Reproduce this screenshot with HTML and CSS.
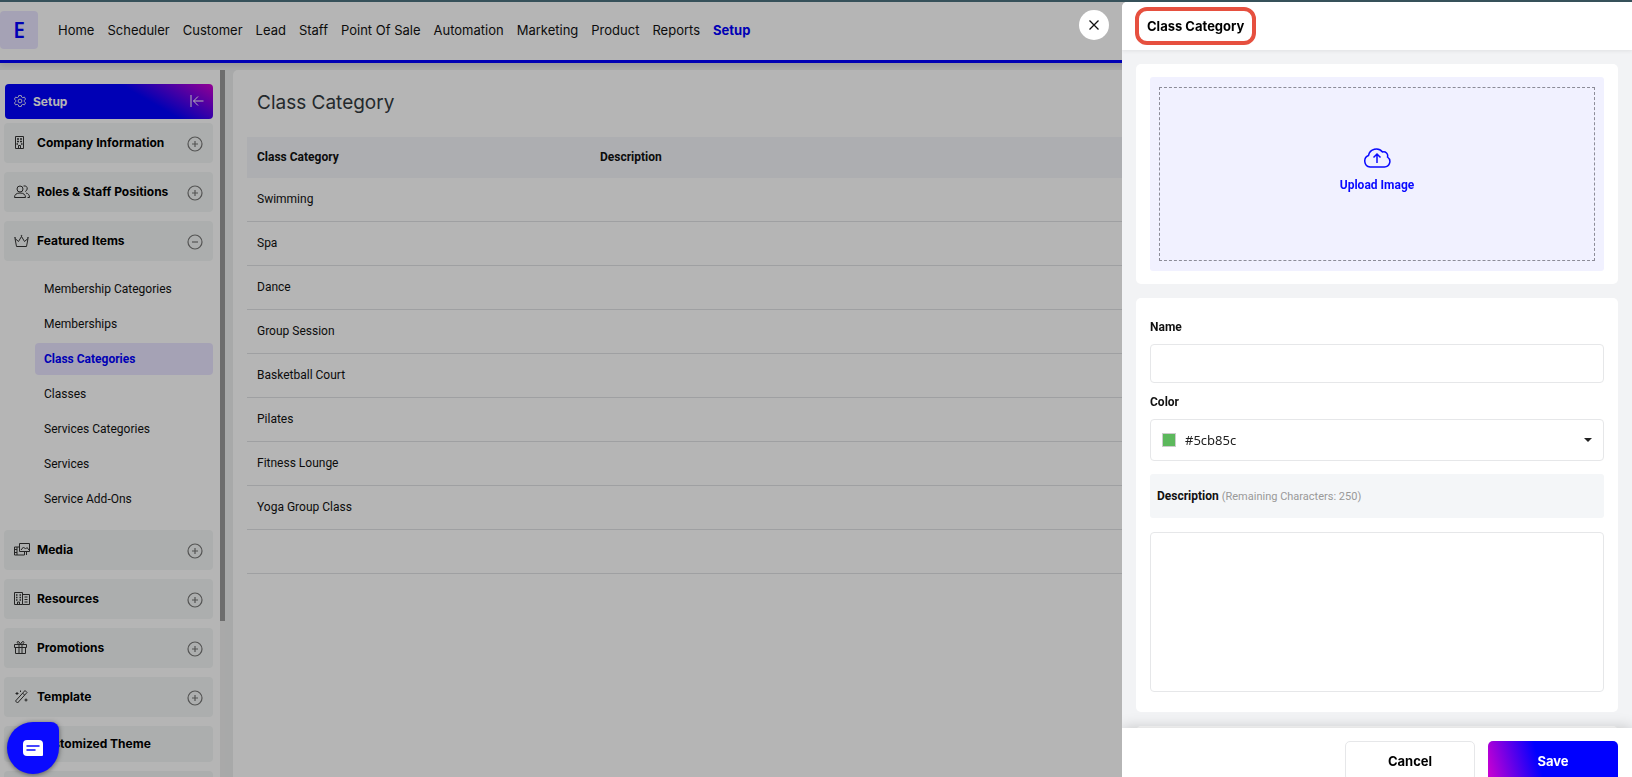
FILE: index.html
```html
<!DOCTYPE html>
<html lang="en">
<head>
  <meta charset="UTF-8">
  <meta name="viewport" content="width=device-width, initial-scale=1">
  <title>Class Category</title>
  <link rel="stylesheet" href="styles.css">
</head>
<body>
<svg class="defs">
  <symbol id="plus" viewBox="0 0 16 16"><circle cx="8" cy="8" r="7"/><path d="M8 5v6M5 8h6"/></symbol>
  <symbol id="minus" viewBox="0 0 16 16"><circle cx="8" cy="8" r="7"/><path d="M5 8h6"/></symbol>
</svg>

<div class="page">
  <header class="navbar">
    <a class="logo" href="#">E</a>
    <nav class="nav">
      <a href="#">Home</a>
      <a href="#">Scheduler</a>
      <a href="#">Customer</a>
      <a href="#">Lead</a>
      <a href="#">Staff</a>
      <a href="#">Point Of Sale</a>
      <a href="#">Automation</a>
      <a href="#">Marketing</a>
      <a href="#">Product</a>
      <a href="#">Reports</a>
      <a href="#" class="active">Setup</a>
    </nav>
  </header>

  <div class="content">
    <aside class="sidebar">
      <div class="menu">
        <button class="menu-head">
          <svg class="icon" viewBox="1 1 14 14"><path d="M6.6 1.500h2.800l.5 1.900 1.300.7 2-.6 1.300 2.300-1.400 1.400v1.600l1.400 1.400-1.300 2.300-2-.6-1.300.7-.5 1.900H6.600l-.5-1.900-1.300-.7-2 .6-1.300-2.300 1.400-1.400V7.200L1.500 5.800l1.300-2.300 2 .6 1.300-.7z"/><circle cx="8" cy="8" r="2.200"/></svg>
          <span>Setup</span>
          <svg class="collapse" viewBox="0 0 14 12"><path d="M1 0v12M13.500 6H3.500M8 1.500L3.500 6 8 10.500"/></svg>
        </button>

        <button class="menu-item">
          <svg class="icon" viewBox="0 0 16 16"><path d="M1.500 1.500h8v12h-8z"/><path d="M4.500 13.500v-3h2v3"/><path d="M3 4h2M6 4h2M3 6.500h2M6 6.500h2M2.500 9h1.500M7 9h1.500" stroke-width="1.500"/></svg>
          <span>Company Information</span>
          <svg class="toggle"><use href="#plus"/></svg>
        </button>
        <button class="menu-item">
          <svg class="icon" viewBox="0 0 16 16"><circle cx="6" cy="5" r="3"/><path d="M.5 13.500c0-3 2-4.500 5.500-4.500s5.500 1.500 5.500 4.500zM9.500 2c2.500-.6 4 1 3.700 3-.2 1.300-1 2-2 2.500M12 9c2.300.5 3.500 2 3.500 4.500h-2"/></svg>
          <span>Roles &amp; Staff Positions</span>
          <svg class="toggle"><use href="#plus"/></svg>
        </button>
        <button class="menu-item">
          <svg class="icon" viewBox="0 0 16 16"><path d="M2.500 13.500L1 5.500 4.500 8.500 7.500 3.500l3 5L14 5.500l-1.500 8z"/><circle cx="1" cy="4.800" r=".4"/><circle cx="7.500" cy="2.800" r=".4"/><circle cx="14" cy="4.800" r=".4"/></svg>
          <span>Featured Items</span>
          <svg class="toggle"><use href="#minus"/></svg>
        </button>

        <ul class="submenu">
          <li><a href="#">Membership Categories</a></li>
          <li><a href="#">Memberships</a></li>
          <li><a href="#" class="active">Class Categories</a></li>
          <li><a href="#">Classes</a></li>
          <li><a href="#">Services Categories</a></li>
          <li><a href="#">Services</a></li>
          <li><a href="#">Service Add-Ons</a></li>
        </ul>

        <button class="menu-item">
          <svg class="icon" viewBox="0 0 16 16"><path d="M5.500 1.500h10v8h-10zM7 8l2.500-3 2 2 1.500-1.500L15 8M5.500 5H.5v8h10v-3.500M3 5v8M.5 7.500H3M.5 10.500H3M10.500 9.500v3.500M12.500 9.500v3.500"/></svg>
          <span>Media</span>
          <svg class="toggle"><use href="#plus"/></svg>
        </button>
        <button class="menu-item">
          <svg class="icon" viewBox="0 0 16 16"><path d="M.5 1.500h8v12h-8zM8.500 3.500h7v10h-7M10.500 6h3M10.500 8.500h3M10.500 11h3"/><path d="M2 4h1.500M5.500 4H7M2 6.500h1.500M5.500 6.500H7M2 9h1.500M5.500 9H7" stroke-width="1.500"/><path d="M3.500 13.500v-2.500h2v2.500"/></svg>
          <span>Resources</span>
          <svg class="toggle"><use href="#plus"/></svg>
        </button>
        <button class="menu-item">
          <svg class="icon" viewBox="0 0 16 16"><path d="M.5 4.500h12v3H.5zM1.500 7.500h10v6h-10zM5 4.500v9M8 4.500v9M6.500 4.500C3 4.500 2.500 1.500 4 1.500s2.500 3 2.500 3S7.500 1.500 9 1.500s1.500 3-2.500 3"/></svg>
          <span>Promotions</span>
          <svg class="toggle"><use href="#plus"/></svg>
        </button>
        <button class="menu-item">
          <svg class="icon" viewBox="0 0 16 16"><path d="M1.500 12l9.500-10.500 2 2L3.500 14zM8.500 4l2 2M3 3v3M1.500 4.500h3M12 9.500v3M10.500 11h3M6.500 1.500V3"/></svg>
          <span>Template</span>
          <svg class="toggle"><use href="#plus"/></svg>
        </button>
        <button class="menu-item plain">
          <svg class="icon" viewBox="0 0 16 16"><circle cx="7" cy="7" r="6"/></svg>
          <span>Customized Theme</span>
        </button>
        <button class="menu-item plain"></button>
      </div>
      <div class="scrollbar"><div class="thumb"></div></div>
    </aside>

    <main class="panel">
      <h1>Class Category</h1>
      <table class="list">
        <thead>
          <tr><th class="col-name">Class Category</th><th>Description</th></tr>
        </thead>
        <tbody>
          <tr><td>Swimming</td><td></td></tr>
          <tr><td>Spa</td><td></td></tr>
          <tr><td>Dance</td><td></td></tr>
          <tr><td>Group Session</td><td></td></tr>
          <tr><td>Basketball Court</td><td></td></tr>
          <tr><td>Pilates</td><td></td></tr>
          <tr><td>Fitness Lounge</td><td></td></tr>
          <tr><td>Yoga Group Class</td><td></td></tr>
          <tr><td></td><td></td></tr>
        </tbody>
      </table>
    </main>
  </div>
</div>

<div class="overlay"></div>

<button class="chat" aria-label="Chat">
  <svg viewBox="0 0 20 16"><path d="M4 0h12q4 0 4 4v11q0 1-1 1H4q-4 0-4-4V4q0-4 4-4z" fill="#fff"/><path d="M4 6h12M4 10h8" stroke="#0a0aff" stroke-width="1.500" stroke-linecap="round"/></svg>
</button>

<button class="close" aria-label="Close">
  <svg viewBox="0 0 10 10"><path d="M.5.5l9 9M9.500.5l-9 9"/></svg>
</button>

<form class="drawer">
  <div class="drawer-head"><h2>Class Category</h2></div>

  <div class="drawer-body">
    <section class="card">
      <div class="upload">
        <button type="button" class="upload-btn">
          <svg viewBox="0 0 28 20"><path d="M7 19h14.500a5.500 5.500 0 0 0 3-10 4 4 0 0 0-5-5A8 8 0 0 0 5.500 7.500 6 6 0 0 0 7 19z"/><path d="M14 15V6.500M10.500 9.500L14 6l3.500 3.500"/></svg>
          <span>Upload Image</span>
        </button>
      </div>
    </section>

    <section class="card fields">
      <label for="name">Name</label>
      <input id="name" class="box" type="text">

      <label for="color">Color</label>
      <div class="box color-box">
        <span class="swatch"></span>
        <select id="color">
          <option>#5cb85c</option>
        </select>
        <svg class="caret" viewBox="0 0 8 4"><path d="M0 0h8L4 4z"/></svg>
      </div>

      <label for="description" class="desc-label">Description <small>(Remaining Characters: 250)</small></label>
      <textarea id="description" class="box"></textarea>
    </section>

    <section class="card"></section>
  </div>

  <div class="drawer-foot">
    <button type="button" class="btn">Cancel</button>
    <button type="button" class="btn btn-save">Save</button>
  </div>
</form>
<div class="topline"></div>
</body>
</html>
```
FILE: styles.css
```css
* { box-sizing: border-box; }
body { margin: 0; height: 100vh; overflow: hidden; font-family: Roboto, sans-serif; font-size: 12px; color: #111; background: #edeeef; }
button { font: inherit; color: inherit; border: none; background: none; padding: 0; }
a { color: inherit; text-decoration: none; }
svg { fill: none; stroke: currentColor; }
.defs { display: none; }
.topline { position: fixed; top: 0; left: 0; right: 0; height: 2px; background: #36515a; z-index: 5; }

/* page */
.page { display: flex; flex-direction: column; height: 100vh; padding-top: 2px; }
.navbar { display: flex; align-items: center; gap: 20px; height: 61px; padding-bottom: 3px; background: #fff; border-bottom: 3px solid #0000ff; box-shadow: 0 2px 6px rgba(0,0,0,.1); }
.logo { width: 38px; height: 38px; text-align: center; border-radius: 4px; background: #e9e5ff; color: #0000ff; font: 600 21px/38px "Noto Sans", sans-serif; }
.nav { display: flex; gap: 13px; font-family: Inter, sans-serif; font-size: 13px; }
.nav .active { color: #0000ff; font-weight: bold; }
.content { flex: 1; min-height: 0; display: grid; grid-template-columns: 225px 1fr; gap: 8px; padding-top: 7px; }

/* sidebar */
.sidebar { display: flex; overflow: hidden; }
.menu { flex: 1; background: #fff; padding: 14px 7px 0 4px; display: flex; flex-direction: column; gap: 9px; }
.menu > * { flex-shrink: 0; }
.menu-head, .menu-item { display: flex; align-items: center; text-align: left; font-family: Inter, sans-serif; font-weight: bold; font-size: 12px; border-radius: 4px; }
.menu-head { height: 35px; padding: 0 9px 1px; margin-bottom: -5px; margin-left: 1px; gap: 7px; color: #fff; background: linear-gradient(30deg, #0000ff 65%, #d000d0); }
.menu-head .icon { width: 12px; height: 12px; }
.collapse { width: 14px; height: 12px; margin-left: auto; }
.menu-item { height: 40px; padding: 0 10px 2px; gap: 7px; background: #f3f6f5; color: #000; }
.menu-item.plain { height: 36px; }
.icon { width: 16px; height: 16px; }
.menu-item .icon { margin-top: 2px; color: #333; }
.toggle { width: 16px; height: 16px; margin: 3px 0 0 auto; color: #777; stroke-width: 1.200; }
.submenu { list-style: none; margin: 3px 0 6px 31px; padding: 0; display: flex; flex-direction: column; gap: 3px; }
.submenu a { display: block; line-height: 32px; padding-left: 9px; border-radius: 4px; }
.submenu .active { background: #e9e5ff; color: #0000ff; font-weight: bold; }
.scrollbar { width: 5px; background: #eee; }
.thumb { height: 78%; background: #9a9a9a; }

/* list */
.panel { background: #fff; border-radius: 5px 0 0 0; padding: 19px 14px; }
h1 { margin: 0 10px 20px; font: normal 19px/28px Inter, sans-serif; color: #333b40; }
.list { width: 100%; border-spacing: 0; table-layout: fixed; }
.list th, .list td { text-align: left; padding: 0 10px 2px; }
.list th { height: 41px; background: #f4f6f9; font-weight: bold; }
.list td { height: 44px; border-bottom: 1px solid #e1e2e4; }
.list .col-name { width: 343px; }

.overlay { position: fixed; inset: 0; background: rgba(0,0,0,.29); }
.chat { position: fixed; left: 7px; bottom: 3px; width: 52px; height: 52px; border-radius: 50% 8px 50% 50%; background: #0a0aff; box-shadow: 0 1px 5px rgba(0,0,0,.5); display: flex; align-items: center; justify-content: center; }
.chat svg { width: 20px; height: 16px; stroke: none; }
.close { position: fixed; top: 10px; right: 523px; width: 30px; height: 30px; border-radius: 50%; background: #fff; display: flex; align-items: center; justify-content: center; }
.close svg { width: 10px; height: 10px; stroke-width: 1.300; }

/* drawer */
.drawer { position: fixed; top: 2px; right: 0; bottom: 0; width: 510px; display: flex; flex-direction: column; background: #f2f3f5; border-radius: 5px 0 0 0; overflow: hidden; }
.drawer-head { height: 48px; flex-shrink: 0; padding: 5px 13px; background: #fff; box-shadow: 0 1px 4px rgba(0,0,0,.08); }
.drawer-head h2 { display: inline-block; margin: 0; padding: 0 8px; border: 4px solid #e6503f; border-radius: 12px; font: bold 13px/30px Inter, sans-serif; color: #000; }
.drawer-body { flex: 1; min-height: 0; overflow: hidden; padding: 14px; display: flex; flex-direction: column; gap: 14px; }
.card { flex-shrink: 0; background: #fff; border-radius: 5px; padding: 13px 14px; }
.upload { height: 194px; padding: 10px 9px; background: #f1f1ff; border-radius: 3px; }
.upload-btn { width: 100%; height: 100%; padding-bottom: 8px; border: 1px dashed #8c8c98; color: #0a0aff; font-weight: bold; display: flex; flex-direction: column; align-items: center; justify-content: center; gap: 10px; }
.upload-btn svg { width: 28px; height: 20px; stroke-width: 1.500; }
.fields { display: flex; flex-direction: column; padding: 20px 14px; }
.fields label { line-height: 18px; margin-bottom: 8px; font-weight: bold; }
.box { width: 100%; border: 1px solid #e6e7e9; border-radius: 4px; background: #fff; outline: none; }
input.box { height: 39px; margin-bottom: 10px; padding: 0 12px; }
.color-box { height: 42px; margin-bottom: 13px; padding: 0 11px; display: flex; align-items: center; }
.swatch { width: 14px; height: 14px; background: #5cb85c; border: 1px solid #ccc; }
.color-box select { flex: 1; height: 38px; padding: 0 0 0 9px; border: none; background: none; appearance: none; outline: none; font: 13px "Noto Sans", sans-serif; color: #222; }
.caret { width: 8px; height: 4px; fill: #222; stroke: none; }
.fields .desc-label { height: 44px; line-height: 44px; padding: 0 7px; margin-bottom: 14px; background: #f4f6f8; border-radius: 3px; }
.desc-label small { font-size: 11px; font-weight: normal; color: #999; }
textarea.box { height: 160px; resize: none; padding: 10px; }
.drawer-foot { height: 49px; flex-shrink: 0; display: flex; justify-content: flex-end; gap: 13px; padding: 13px 14px 0; background: #fff; box-shadow: 0 0 14px rgba(0,0,0,.2); }
.btn { width: 130px; height: 40px; padding-bottom: 1px; border: 1px solid #e6e7e9; border-radius: 5px; font: bold 13px Inter, sans-serif; color: #000; }
.btn-save { border: none; color: #fff; background: linear-gradient(75deg, #d000d0, #0000ff 40%); }
```
